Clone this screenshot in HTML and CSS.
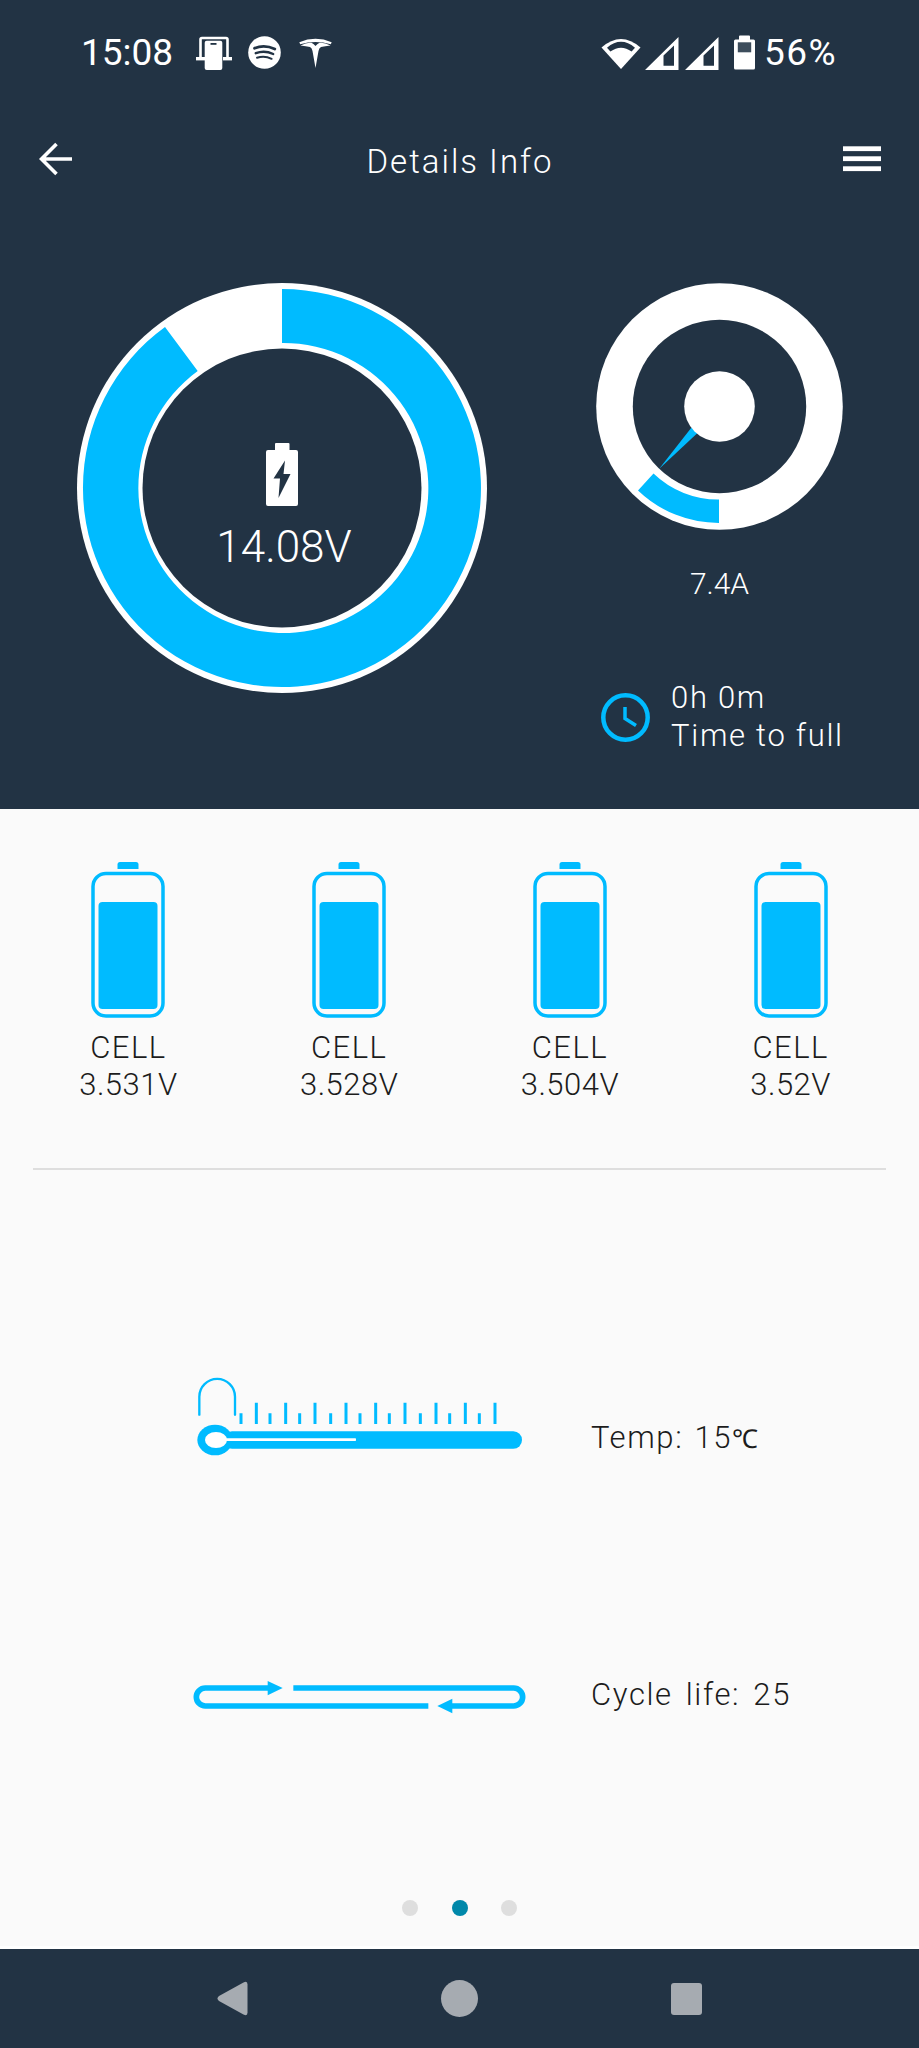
FILE: index.html
```html
<!DOCTYPE html>
<html lang="en">
<head>
<meta charset="utf-8">
<title>Details Info</title>
<link rel="stylesheet" href="styles.css">
</head>
<body>
<div class="screen">
  <header class="top">
    <div class="status">
      <div class="status-left">
        <span class="status-text time">15:08</span>
        <svg class="ic-phone" width="36" height="34" viewBox="0 0 36 34">
          <path d="M4.5 22V3.5a1.5 1.5 0 0 1 1.5-1.5h24a1.5 1.5 0 0 1 1.5 1.5V22" fill="none" stroke="#fff" stroke-width="2.6"/>
          <rect x="0" y="21" width="9" height="3.4" fill="#fff"/>
          <rect x="27" y="21" width="9" height="3.4" fill="#fff"/>
          <rect x="8.7" y="4.7" width="17.6" height="29.3" rx="2" fill="#fff"/>
          <rect x="14.5" y="7" width="6" height="1.8" fill="#223344"/>
        </svg>
        <svg class="ic-spotify" width="33" height="33" viewBox="0 0 33 33">
          <circle cx="16.5" cy="16.5" r="16.3" fill="#fff"/>
          <g fill="none" stroke="#223344" stroke-linecap="round">
            <path d="M6.5 12.2Q16.5 8.2 26.8 13" stroke-width="2.8"/>
            <path d="M7.8 17.2Q16.5 13.8 25.2 18" stroke-width="2.4"/>
            <path d="M9 21.8Q16.5 19.3 23.6 22.8" stroke-width="2"/>
          </g>
        </svg>
        <svg class="ic-tesla" width="33" height="30" viewBox="0 0 33 30">
          <path d="M0.3 4.200Q16.500 -2.500 32.700 4.200L31.800 6.200Q16.500 1.800 1.200 6.200Z" fill="#fff"/>
          <path d="M1.500 7.500Q8 4 12.500 4.800Q15 6 16.500 8Q18 6 20.500 4.800Q25 4 31.500 7.500Q26 8 22 9Q20 10 19.500 13L16.500 30L13.500 13Q13 10 11 9Q7 8 1.500 7.500Z" fill="#fff"/>
        </svg>
      </div>
      <div class="status-right">
        <svg class="ic-wifi" width="40" height="33" viewBox="0 0 40 33">
          <path d="M20 33L0.5 11.500Q20 -5.500 39.500 11.500Z" fill="#fff"/>
          <path d="M6 11.700Q20 0 34 11.700L30.600 15.500Q20 7.800 9.400 15.500Z" fill="#223344"/>
        </svg>
        <svg class="ic-signal" width="34" height="33" viewBox="0 0 34 33">
          <path fill-rule="evenodd" d="M33.500 0V33H0ZM29 8.500L18.500 18.500V28.800H29Z" fill="#fff"/>
        </svg>
        <svg class="ic-signal second" width="34" height="33" viewBox="0 0 34 33">
          <path fill-rule="evenodd" d="M33.500 0V33H0ZM29 8.500L18.500 18.500V28.800H29Z" fill="#fff"/>
        </svg>
        <svg class="ic-battery" width="21" height="35" viewBox="0 0 21 35">
          <path d="M5 4.500V1.500a1 1 0 0 1 1-1h9a1 1 0 0 1 1 1v3h3.500a1.500 1.500 0 0 1 1.500 1.500V33a1.500 1.500 0 0 1-1.500 1.500H1.500A1.500 1.500 0 0 1 0 33V6a1.500 1.500 0 0 1 1.500-1.500Z" fill="#fff"/>
          <rect x="3.800" y="7.300" width="13.400" height="10" fill="#3d4d5c"/>
        </svg>
        <span class="status-text percent">56%</span>
      </div>
    </div>

    <div class="toolbar">
      <svg class="ic-back" width="34" height="34" viewBox="0 0 34 34">
        <path d="M33 17H3M17.500 2L2.500 17L17.500 32" fill="none" stroke="#fff" stroke-width="3.600"/>
      </svg>
      <h1 class="title">Details Info</h1>
      <svg class="ic-menu" width="38" height="26" viewBox="0 0 38 26">
        <rect y="0.300" width="38" height="4.800" fill="#fff"/>
        <rect y="10.300" width="38" height="4.800" fill="#fff"/>
        <rect y="20.300" width="38" height="4.800" fill="#fff"/>
      </svg>
    </div>

    <div class="hero">
      <div class="voltage">
        <svg class="voltage-ring" width="410" height="410" viewBox="0 0 410 410">
          <circle cx="205" cy="205" r="205" fill="#fff"/>
          <path d="M205 6A199 199 0 1 1 88 44L120.700 88A145 145 0 1 0 205 60Z" fill="#00bbff"/>
          <circle cx="205" cy="205" r="139.500" fill="#223344"/>
        </svg>
        <div class="voltage-center">
          <svg width="32" height="63" viewBox="0 0 32 63">
            <path fill-rule="evenodd" d="M9 7V1a1 1 0 0 1 1-1h12.500a1 1 0 0 1 1 1v6H30a2 2 0 0 1 2 2V61a2 2 0 0 1-2 2H2a2 2 0 0 1-2-2V9a2 2 0 0 1 2-2ZM19 17.500L7.500 35.500H14L12.500 55L24.500 31H17.500Z" fill="#fff"/>
          </svg>
          <span class="voltage-value">14.08V</span>
        </div>
      </div>

      <div class="side">
        <svg class="current-ring" width="247" height="247" viewBox="0 0 247 247">
          <circle cx="123.500" cy="123.500" r="123.300" fill="#fff"/>
          <circle cx="123.500" cy="123.500" r="86.700" fill="#223344"/>
          <path d="M123 240A116.500 116.500 0 0 1 42 207.500L57.500 190.500A93 93 0 0 0 123 216.500Z" fill="#00bbff"/>
          <path d="M95.500 144.500L101.500 150L63 186Z" fill="#00bbff"/>
          <circle cx="123.500" cy="123.500" r="35.300" fill="#fff"/>
        </svg>
        <div class="current-value">7.4A</div>
        <div class="eta">
          <svg width="49" height="49" viewBox="0 0 49 49">
            <circle cx="24.500" cy="24.500" r="22.200" fill="none" stroke="#00bbff" stroke-width="4.500"/>
            <path d="M24 14V25.500L35 32.500" fill="none" stroke="#00bbff" stroke-width="3.500"/>
          </svg>
          <div class="eta-text">
            <div>0h 0m</div>
            <div>Time to full</div>
          </div>
        </div>
      </div>
    </div>
  </header>

  <main class="content">
    <svg class="defs" width="0" height="0">
      <symbol id="cell" viewBox="0 0 74 156">
        <path d="M26.500 7V2.500a2.500 2.500 0 0 1 2.500-2.500h16a2.500 2.500 0 0 1 2.500 2.500V7Z" fill="#00bbff"/>
        <rect x="2" y="11.500" width="70" height="142.500" rx="13" fill="none" stroke="#00bbff" stroke-width="3.500"/>
        <rect x="7.500" y="40" width="59" height="107" rx="4" fill="#00bbff"/>
      </symbol>
    </svg>
    <section class="cells">
      <div class="cell">
        <svg width="74" height="156"><use href="#cell"/></svg>
        <div class="cell-text"><span class="cell-name">CELL</span><br>3.531V</div>
      </div>
      <div class="cell">
        <svg width="74" height="156"><use href="#cell"/></svg>
        <div class="cell-text"><span class="cell-name">CELL</span><br>3.528V</div>
      </div>
      <div class="cell">
        <svg width="74" height="156"><use href="#cell"/></svg>
        <div class="cell-text"><span class="cell-name">CELL</span><br>3.504V</div>
      </div>
      <div class="cell">
        <svg width="74" height="156"><use href="#cell"/></svg>
        <div class="cell-text"><span class="cell-name">CELL</span><br>3.52V</div>
      </div>
    </section>

    <hr class="divider">

    <section class="metric metric-temp">
      <svg width="360" height="160" viewBox="0 0 1080 480">
        <path d="M58 164V110a53.500 53.500 0 0 1 107 0V164" fill="none" stroke="#00bbff" stroke-width="7" stroke-linecap="round"/>
        <path d="M183 160V192M229 128V192M270 160V192M317 128V192M359 160V192M405 128V192M452 160V192M498 128V192M540 160V192M587 128V192M628 160V192M675 128V192M721 160V192M768 128V192M809 160V192M856 128V192M898 160V192M945 128V192" fill="none" stroke="#00bbff" stroke-width="9"/>
        <rect x="130" y="214" width="896" height="52" rx="26" fill="#00bbff"/>
        <ellipse cx="105" cy="240" rx="53" ry="46" fill="#00bbff"/>
        <ellipse cx="108" cy="240" rx="33" ry="24" fill="#fff"/>
        <rect x="130" y="235" width="398" height="8" rx="2" fill="#fff"/>
      </svg>
      <span class="metric-label temp-label">Temp: 15<span class="unit">℃</span></span>
    </section>

    <section class="metric metric-cycle">
      <svg width="360" height="68" viewBox="0 0 1080 204">
        <path d="M265 81H76a27 27 0 0 0 0 54H745" fill="none" stroke="#00bbff" stroke-width="17"/>
        <path d="M340 81H1001a27 27 0 0 1 0 54H815" fill="none" stroke="#00bbff" stroke-width="17"/>
        <path d="M263 60L308 81L263 103Z" fill="#00bbff"/>
        <path d="M772 135L817 113V157Z" fill="#00bbff"/>
      </svg>
      <span class="metric-label">Cycle life: 25</span>
    </section>

    <div class="pager">
      <span class="dot"></span>
      <span class="dot active"></span>
      <span class="dot"></span>
    </div>
  </main>

  <nav class="navbar">
    <svg width="31" height="35" viewBox="0 0 31 35">
      <path d="M26.500 1.500Q30.500 -0.500 30.500 3.500V31.500Q30.500 35.500 26.500 33.500L2 20Q-1 17.500 2 15Z" fill="#a6abb1"/>
    </svg>
    <span class="nav-home"></span>
    <span class="nav-recent"></span>
  </nav>
</div>
</body>
</html>
```
FILE: styles.css
```css
* {
  box-sizing: border-box;
}

html,
body {
  margin: 0;
  padding: 0;
}

body {
  font-family: Roboto, "Liberation Sans", sans-serif;
  background: #fafafa;
}

svg {
  display: block;
  flex: none;
}

.screen {
  width: 919px;
  height: 2048px;
  display: flex;
  flex-direction: column;
  overflow: hidden;
}

.top {
  height: 809px;
  flex: none;
  background: #223344;
  color: #fff;
}

.status {
  height: 105px;
  padding: 0 82px;
  display: flex;
  justify-content: space-between;
  align-items: center;
}

.status-left,
.status-right {
  display: flex;
  align-items: center;
}

.status-text {
  font-size: 37px;
  font-weight: 450;
  line-height: 40px;
}

.time {
  width: 114px;
  margin-left: -1px;
  margin-right: 1px;
}

.ic-spotify {
  margin-left: 16px;
}

.ic-tesla {
  margin-left: 18px;
}

.ic-signal {
  margin-left: 3.500px;
  margin-top: 1px;
}

.ic-signal.second {
  margin-left: 6.500px;
}

.ic-battery {
  margin-left: 15px;
  margin-top: -1px;
}

.percent {
  width: 72px;
  margin-left: 9px;
  margin-right: 1px;
  letter-spacing: 1.500px;
  white-space: nowrap;
}

.toolbar {
  height: 108px;
  padding: 0 38px 0 39px;
  display: grid;
  grid-template-columns: 1fr auto 1fr;
  align-items: center;
}

.ic-menu {
  justify-self: end;
}

.title {
  margin: 5px 0 0;
  font-size: 33px;
  font-weight: 300;
  letter-spacing: 2px;
  line-height: 40px;
}

.hero {
  display: flex;
  padding: 70px 0 0 77px;
}

.voltage {
  display: grid;
  width: 410px;
  height: 410px;
}

.voltage-ring,
.voltage-center {
  grid-area: 1 / 1;
}

.voltage-center {
  display: flex;
  flex-direction: column;
  align-items: center;
  padding-top: 160px;
}

.voltage-value {
  margin: 16px 0 0 4px;
  font-size: 44px;
  font-weight: 300;
  line-height: 50px;
}

.side {
  width: 247px;
  margin-left: 109px;
}

.current-value {
  margin-top: 36px;
  text-align: center;
  font-size: 30px;
  font-weight: 300;
  line-height: 36px;
}

.eta {
  margin-top: 77px;
  margin-left: 5px;
  display: flex;
  align-items: center;
  gap: 21px;
}

.eta-text {
  font-size: 31px;
  font-weight: 300;
  line-height: 38px;
  letter-spacing: 1.700px;
  white-space: nowrap;
}

.content {
  flex: 1;
  display: flex;
  flex-direction: column;
  min-height: 0;
}

.defs {
  position: absolute;
}

.cells {
  display: grid;
  grid-template-columns: repeat(4, 1fr);
  padding: 53px 18px 0;
}

.cell {
  display: flex;
  flex-direction: column;
  align-items: center;
}

.cell-text {
  margin-top: 11px;
  text-align: center;
  color: #1c1c1c;
  font-size: 31px;
  font-weight: 300;
  letter-spacing: 0.5px;
  line-height: 37px;
}

.cell-name {
  letter-spacing: 1.500px;
}

.divider {
  width: 853px;
  height: 2px;
  margin: 65px 0 0 33px;
  border: 0;
  background: #dedede;
}

.metric {
  display: flex;
  align-items: center;
  padding-left: 180px;
}

.metric-temp {
  margin-top: 190px;
}

.metric-cycle {
  margin-top: 141px;
}

.metric-label {
  margin-left: 51px;
  color: #1c1c1c;
  font-size: 31px;
  font-weight: 300;
  letter-spacing: 1.600px;
  word-spacing: 4px;
  line-height: 36px;
}

.temp-label {
  margin-top: -4px;
  word-spacing: 2px;
}

.unit {
  font-size: 26px;
  letter-spacing: 0;
}

.pager {
  margin-top: auto;
  padding-bottom: 30px;
  display: flex;
  justify-content: center;
  gap: 33.500px;
}

.dot {
  width: 16px;
  height: 16px;
  border-radius: 50%;
  background: #dedede;
}

.dot.active {
  background: #0088aa;
}

.navbar {
  height: 102px;
  flex: none;
  padding-left: 217px;
  border-top: 3px solid #fff;
  background: #223344;
  background-clip: padding-box;
  display: flex;
  align-items: center;
  gap: 193px;
}

.nav-home {
  width: 37px;
  height: 37px;
  border-radius: 50%;
  background: #a6abb1;
}

.nav-recent {
  width: 31px;
  height: 32px;
  border-radius: 3px;
  background: #a6abb1;
}
```
